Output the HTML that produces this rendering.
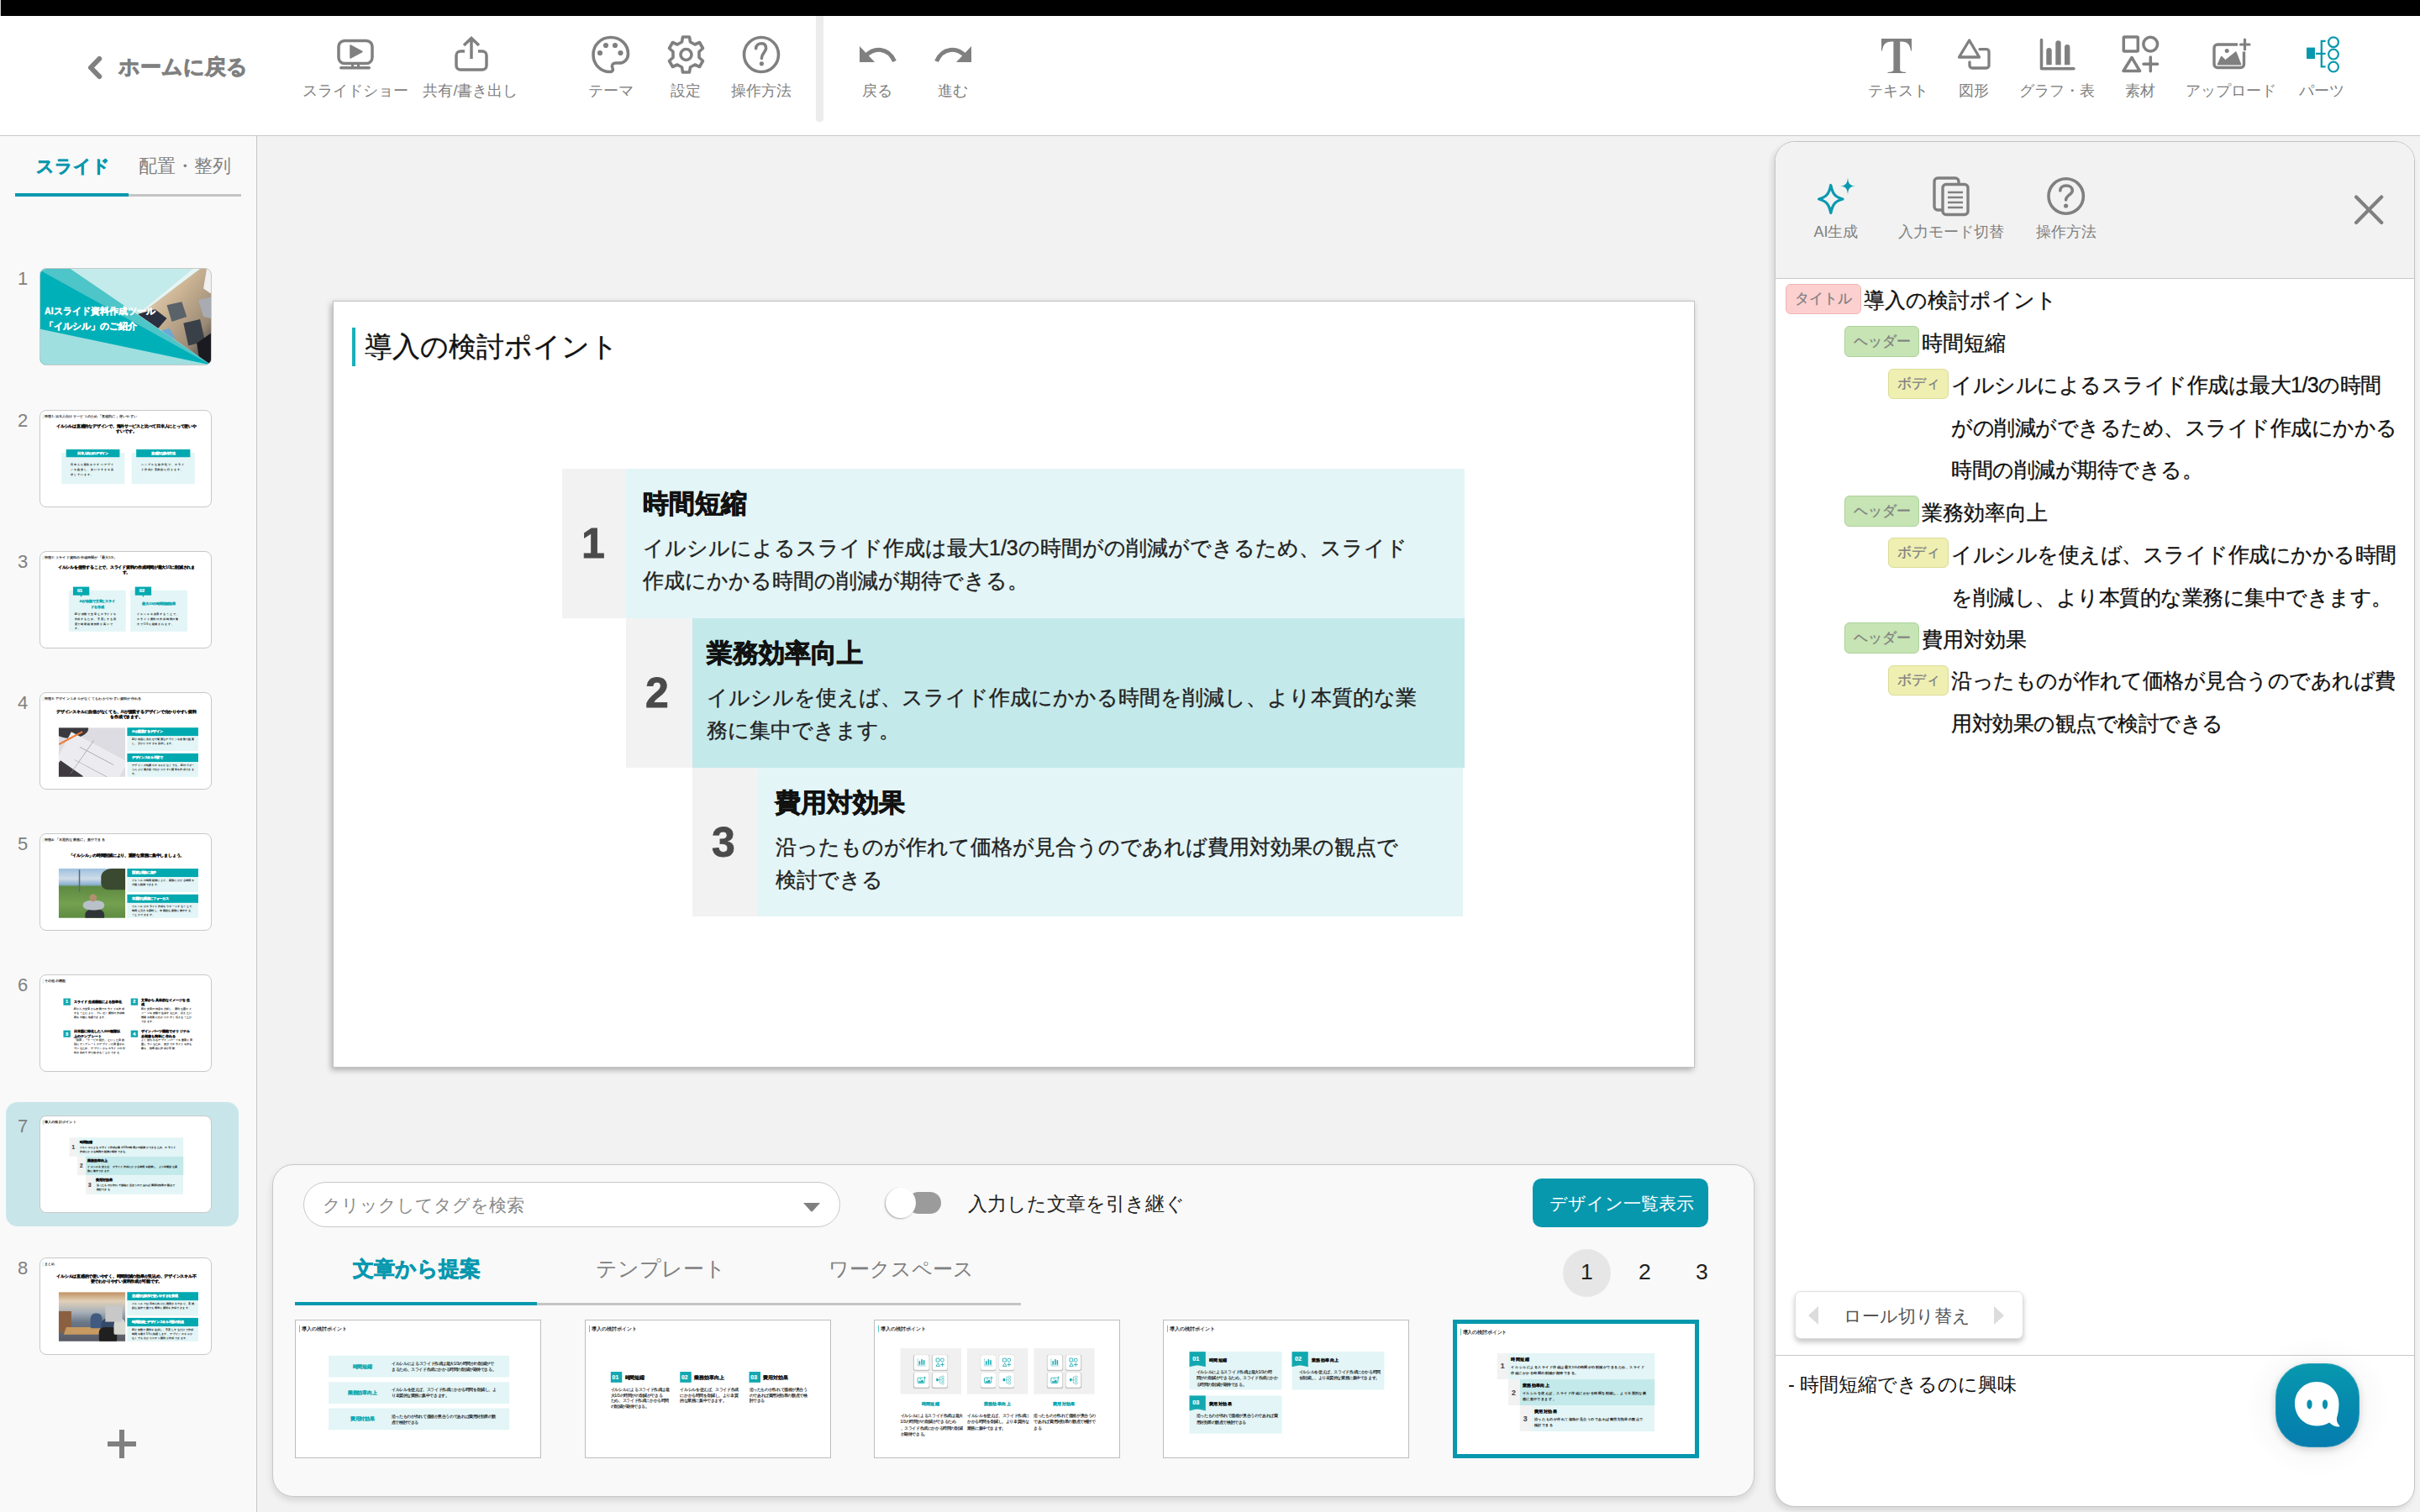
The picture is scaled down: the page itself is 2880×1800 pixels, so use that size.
<!DOCTYPE html>
<html lang="ja">
<head>
<meta charset="utf-8">
<style>
*{box-sizing:border-box;margin:0;padding:0}
html,body{width:2880px;height:1800px;overflow:hidden}
body{position:relative;background:#f2f2f2;font-family:"Liberation Sans",sans-serif;color:#222}
.a{position:absolute;white-space:nowrap}
.g{color:#808080}
.lbl{position:absolute;font-size:18px;line-height:18px;color:#808080;white-space:nowrap;transform:translateX(-50%);top:99px}
svg{position:absolute;overflow:visible}
#topbar{position:absolute;left:0;top:0;width:2880px;height:19px;background:#000}
#toolbar{position:absolute;left:0;top:19px;width:2880px;height:143px;background:#fff;border-bottom:1px solid #c8c8c8}
#sep{position:absolute;left:971px;top:19px;width:9px;height:126px;background:#ececec;border-radius:0 0 4px 4px}
#side{position:absolute;left:0;top:162px;width:306px;height:1638px;background:#f9f9f9;border-right:1px solid #c4c4c4}
.thumb{position:absolute;left:47px;width:205px;height:116px;background:#fff;border:1px solid #c8c8c8;border-radius:8px;overflow:hidden}
.num{position:absolute;left:21px;font-size:22px;line-height:22px;color:#808080}
#slide{position:absolute;left:396px;top:358px;width:1621px;height:913px;background:#fff;box-shadow:inset 0 0 0 1px #c2c2c2,-2px 3px 7px rgba(0,0,0,.28)}
.sl{position:absolute;left:0;top:0;width:1620px;height:912px;transform-origin:0 0}
.sl>div{position:absolute;white-space:nowrap}
#slide .sl>div{-webkit-text-stroke:.35px}
#slide .sl>div.b{-webkit-text-stroke:.8px}
.thumb .sl>div{-webkit-text-stroke:.9px}
.thumb .sl>div.b{-webkit-text-stroke:1.8px}
.dt .sl>div{-webkit-text-stroke:0.8px}
.box{position:absolute}
.gr{background:#f2f2f2}
.t1{background:#e3f5f6}
.t2{background:#c4e9ea}
.nb{position:absolute;font-weight:bold;font-size:50px;line-height:50px;color:#4a4a4a}
.hd{position:absolute;font-weight:bold;font-size:30.5px;line-height:30.5px;color:#111;white-space:nowrap}
.bd{position:absolute;font-size:25px;line-height:39px;color:#222;white-space:nowrap}
#bottom{position:absolute;left:324px;top:1386px;width:1764px;height:396px;background:#f9f9f9;border:1px solid #c8c8c8;border-radius:25px;box-shadow:0 4px 8px rgba(0,0,0,.12)}
#rp{position:absolute;left:2112px;top:168px;width:762px;height:1626px;background:#fff;border:1px solid #c4c4c4;border-radius:24px;overflow:hidden;box-shadow:-3px 4px 7px rgba(0,0,0,.12)}
.tag{position:absolute;height:36px;border-radius:6px;font-size:17px;line-height:34px;color:#808080;text-align:center;white-space:nowrap;-webkit-text-stroke:.3px}
.tt{background:#fdd0d0;border:1px solid #f0b4b4}
.th{background:#c6e4b4;border:1px solid #add29a;height:37px;line-height:35px}
.tb{background:#efefb2;border:1px solid #dcdc98}
.rt{position:absolute;font-size:25px;line-height:25px;color:#111;white-space:nowrap;-webkit-text-stroke:.3px}
.dt{position:absolute;width:293px;height:165px;background:#fff;border:1px solid #bdbdbd;overflow:hidden}
</style>
</head>
<body>
<div id="topbar"></div>
<div class="a" style="left:0;top:0;width:1px;height:19px;background:#cfcfcf"></div>
<div id="toolbar"></div>
<div id="sep"></div>

<!-- home -->
<svg style="left:100px;top:62px" width="30" height="36" viewBox="0 0 30 36"><path d="M18.2 8 L8 18.5 L18.2 29" fill="none" stroke="#808080" stroke-width="6" stroke-linecap="round" stroke-linejoin="round"/></svg>
<div class="a g" style="left:141px;top:68px;font-size:24.5px;line-height:24.5px;font-weight:bold;-webkit-text-stroke:0.9px">ホームに戻る</div>

<!-- toolbar icons -->
<svg style="left:401px;top:46px" width="44" height="38" viewBox="0 0 44 38"><rect x="2" y="2.5" width="40" height="27" rx="7" fill="none" stroke="#808080" stroke-width="3.5"/><path d="M16 8 L30 15.5 L16 23 Z" fill="#808080" stroke="#808080" stroke-width="1.5" stroke-linejoin="round"/><rect x="17" y="29" width="3" height="5" fill="#808080"/><rect x="24" y="29" width="3" height="5" fill="#808080"/><rect x="3" y="33" width="37" height="3.5" rx="1.7" fill="#808080"/></svg>
<div class="lbl" style="left:422.5px">スライドショー</div>

<svg style="left:541px;top:43px" width="40" height="42" viewBox="0 0 40 42"><path d="M12 18 H7 a5 5 0 0 0 -5 5 V35 a5 5 0 0 0 5 5 H33 a5 5 0 0 0 5 -5 V23 a5 5 0 0 0 -5 -5 H28" fill="none" stroke="#808080" stroke-width="3.5"/><path d="M20 27 V3 M11 11 L20 2.5 L29 11" fill="none" stroke="#808080" stroke-width="3.5"/></svg>
<div class="lbl" style="left:560px">共有/書き出し</div>

<svg style="left:704px;top:42px" width="46" height="46" viewBox="0 0 46 46"><path d="M23 2.5 C11 2.5 2 11.5 2 23 C2 35 11 43.5 22 43.5 C25 43.5 26 41 25 39 C23.5 36 25 33 29 33 L33 33 C39 33 43.5 28.5 43.5 22 C43.5 11 34.5 2.5 23 2.5 Z" fill="none" stroke="#808080" stroke-width="3.6"/><circle cx="10" cy="21" r="3.1" fill="#808080"/><circle cx="17" cy="12" r="3.1" fill="#808080"/><circle cx="28" cy="12" r="3.1" fill="#808080"/><circle cx="34.5" cy="21" r="3.1" fill="#808080"/></svg>
<div class="lbl" style="left:726.5px">テーマ</div>

<svg style="left:794px;top:42px" width="45" height="46" viewBox="0 0 45 46"><path d="M18.5 2 H26.5 L27.5 8 L33 11 L38.5 8.5 L42.5 15.5 L38 19.5 V26.5 L42.5 30.5 L38.5 37.5 L33 35 L27.5 38 L26.5 44 H18.5 L17.5 38 L12 35 L6.5 37.5 L2.5 30.5 L7 26.5 V19.5 L2.5 15.5 L6.5 8.5 L12 11 L17.5 8 Z" fill="none" stroke="#808080" stroke-width="3.6" stroke-linejoin="round"/><circle cx="22.5" cy="23" r="6.5" fill="none" stroke="#808080" stroke-width="3.6"/></svg>
<div class="lbl" style="left:816px">設定</div>

<svg style="left:883px;top:42px" width="46" height="46" viewBox="0 0 46 46"><circle cx="23" cy="23" r="20.5" fill="none" stroke="#808080" stroke-width="3.6"/><path d="M16.6 15.8 C16.6 12 19.5 9.7 23.5 9.7 C27.5 9.7 28.6 12.5 28.6 15.5 C28.6 20 23.4 21 23.4 27.5" fill="none" stroke="#808080" stroke-width="3.6" stroke-linecap="round"/><circle cx="23.4" cy="33.8" r="2.6" fill="#808080"/></svg>
<div class="lbl" style="left:906px">操作方法</div>

<svg style="left:1022px;top:53px" width="46" height="22" viewBox="0 0 46 22"><path d="M1 2 V21 H19 Z" fill="#808080"/><path d="M8 14 C18 3 35 3 42.5 20" fill="none" stroke="#808080" stroke-width="5"/></svg>
<div class="lbl" style="left:1043.5px">戻る</div>
<svg style="left:1111px;top:53px" width="46" height="22" viewBox="0 0 46 22"><path d="M45 2 V21 H27 Z" fill="#808080"/><path d="M38 14 C28 3 11 3 3.5 20" fill="none" stroke="#808080" stroke-width="5"/></svg>
<div class="lbl" style="left:1133.5px">進む</div>

<!-- right toolbar -->
<svg style="left:2235px;top:42px" width="45" height="50" viewBox="2235 42 45 50"><path d="M2239 46 H2275 V60.5 H2274 C2273 53 2270 49.5 2263 49.5 H2261.2 V83.5 C2261.2 85 2264 85.6 2268 86 V87 H2246.5 V86 C2250.5 85.6 2253.4 85 2253.4 83.5 V49.5 H2251 C2244 49.5 2241 53 2240 60.5 H2239 Z" fill="#808080"/></svg>
<div class="lbl" style="left:2258.5px">テキスト</div>
<svg style="left:2320px;top:40px" width="60" height="50" viewBox="2320 40 60 50"><path d="M2343.6 48 L2355.5 68 L2331.5 68 Z" fill="none" stroke="#808080" stroke-width="3.3" stroke-linejoin="round"/><path d="M2356 58.6 H2364 a3 3 0 0 1 3 3 V78 a3 3 0 0 1 -3 3 H2347 a3 3 0 0 1 -3 -3 V74" fill="none" stroke="#808080" stroke-width="3.3" stroke-linecap="round"/></svg>
<div class="lbl" style="left:2349px">図形</div>
<svg style="left:2420px;top:40px" width="60" height="50" viewBox="2420 40 60 50"><path d="M2429.5 47.5 V81.8 H2468" fill="none" stroke="#808080" stroke-width="3.5" stroke-linecap="round" stroke-linejoin="round"/><path d="M2435.3 77.2 V60.2 a3.2 3.2 0 0 1 6.4 0 V77.2 Z M2446.3 77.2 V51.5 a3.2 3.2 0 0 1 6.4 0 V77.2 Z M2457 77.2 V56.2 a3.2 3.2 0 0 1 6.4 0 V77.2 Z" fill="#808080"/></svg>
<div class="lbl" style="left:2448px">グラフ・表</div>
<svg style="left:2515px;top:38px" width="65" height="55" viewBox="2515 38 65 55"><rect x="2527.3" y="44" width="17" height="17" rx="1" fill="none" stroke="#808080" stroke-width="3.5"/><circle cx="2559.2" cy="52.6" r="8.4" fill="none" stroke="#808080" stroke-width="3.5"/><path d="M2537 68.5 L2546.5 84.5 H2527 Z" fill="none" stroke="#808080" stroke-width="3.5" stroke-linejoin="round"/><path d="M2559.3 68 V84.7 M2551 76.2 H2567.6" fill="none" stroke="#808080" stroke-width="3.5" stroke-linecap="round"/></svg>
<div class="lbl" style="left:2547px">素材</div>
<svg style="left:2625px;top:40px" width="60" height="50" viewBox="2625 40 60 50"><path d="M2663 53 H2639 a4 4 0 0 0 -4 4 V76.5 a4 4 0 0 0 4 4 H2666.5 a4 4 0 0 0 4 -4 V61.5" fill="none" stroke="#808080" stroke-width="3.4"/><path d="M2639 77 L2643.6 67 L2648.5 71.5 L2661 61.6 L2667 77 Z" fill="#808080" stroke="#808080" stroke-width="1" stroke-linejoin="round"/><circle cx="2650.2" cy="60.4" r="2.5" fill="#808080"/><path d="M2671.5 47.2 V58.8 M2666.5 53 H2677" fill="none" stroke="#808080" stroke-width="3.2" stroke-linecap="round"/></svg>
<div class="lbl" style="left:2655px">アップロード</div>
<svg style="left:2740px;top:40px" width="50" height="50" viewBox="2740 40 50 50"><rect x="2745" y="56.6" width="10" height="13.4" fill="#0798ae"/><path d="M2756 63.8 H2767.6 M2767.6 48.8 H2762.8 V79.3 H2767.6" fill="none" stroke="#0798ae" stroke-width="2.3"/><circle cx="2777" cy="50.2" r="5.9" fill="none" stroke="#0798ae" stroke-width="2.2"/><circle cx="2777" cy="64.6" r="5.9" fill="none" stroke="#0798ae" stroke-width="2.2"/><circle cx="2777" cy="79.6" r="5.9" fill="none" stroke="#0798ae" stroke-width="2.2"/></svg>
<div class="lbl" style="left:2763px">パーツ</div>

<!-- sidebar -->
<div id="side"></div>
<div class="a" style="left:43px;top:187px;font-size:20.7px;line-height:21px;font-weight:bold;color:#0798ae;-webkit-text-stroke:.6px">スライド</div>
<div class="a" style="left:165px;top:187px;font-size:21.8px;line-height:21px;color:#808080">配置・整列</div>
<div class="a" style="left:18px;top:231px;width:269px;height:3px;background:#c4c4c4"></div>
<div class="a" style="left:18px;top:230px;width:135px;height:4px;background:#0798ae"></div>

<!--SIDEBAR--><div class="a" style="left:7px;top:1312px;width:277px;height:148px;background:#c8e6ea;border-radius:14px"></div>
<div class="num" style="top:321px">1</div>
<div class="thumb" style="top:319px"><svg style="left:0;top:0" width="203" height="114" viewBox="0 0 205 116" preserveAspectRatio="none">
<defs><linearGradient id="ph" x1="0" y1="0" x2="1" y2="1"><stop offset="0" stop-color="#ece4d4"/><stop offset=".4" stop-color="#cdb595"/><stop offset=".75" stop-color="#9a8a76"/><stop offset="1" stop-color="#303038"/></linearGradient>
<clipPath id="pc"><polygon points="183,0 205,0 205,116 117,55"/></clipPath></defs>
<rect width="205" height="116" fill="#c4ebeb"/>
<polygon points="0,0 36,0 205,116 0,116" fill="#4ec5c8"/>
<polygon points="0,2 205,116.5 0,116" fill="#00b0b8"/>
<polygon points="0,73 205,116.5 0,116" fill="#9fdfe0"/>
<polygon points="183,0 205,0 205,116 117,55" fill="url(#ph)"/>
<g clip-path="url(#pc)">
<polygon points="178,0 192,0 124,52 117,55" fill="#e3f6f6"/>
<polygon points="117,55 138,49 152,60 140,74" fill="#2a3040"/>
<polygon points="152,44 170,40 176,58 158,64" fill="#5a626a"/>
<polygon points="190,38 205,34 205,60 196,58" fill="#a8acb2"/>
<polygon points="172,66 192,61 198,88 178,93" fill="#3a4048"/>
<polygon points="142,76 155,72 162,84 149,88" fill="#6aaad8"/>
<polygon points="188,90 205,78 205,116 192,116" fill="#1a1a20"/>
<polygon points="200,0 205,0 205,30 196,24" fill="#f0f0f0"/>
</g>
</svg>
<div class="a" style="left:5px;top:44.5px;font-size:10.6px;line-height:11px;color:#fff;font-weight:bold;-webkit-text-stroke:.3px">AIスライド資料作成ツール</div>
<div class="a" style="left:5px;top:63px;font-size:10.6px;line-height:11px;color:#fff;font-weight:bold;-webkit-text-stroke:.3px">「イルシル」のご紹介</div></div>
<div class="num" style="top:490px">2</div>
<div class="thumb" style="top:488px"><div class="sl" style="transform:scale(0.1264);"><div style="left:22px;top:32px;width:5px;height:46px;background:#9adfe2;"></div><div style="left:38px;top:38px;font-size:33px;line-height:33px;color:#222;">特徴1: 日本人向けサービスのため「直感的に」使いやすい</div><div class="b" style="left:810px;top:128.75px;font-size:36.5px;line-height:36.5px;color:#111;font-weight:bold;transform:translateX(-50%)">イルシルは直感的なデザインで、海外サービスと比べて日本人にとって使いや</div><div class="b" style="left:810px;top:175.75px;font-size:36.5px;line-height:36.5px;color:#111;font-weight:bold;transform:translateX(-50%)">すいです。</div><div style="left:200px;top:397px;width:594px;height:293px;background:#e3f5f6;"></div><div style="left:860px;top:397px;width:594px;height:293px;background:#e3f5f6;"></div><div style="left:243px;top:364px;width:504px;height:73px;background:#00a9b0;"></div><div style="left:903px;top:364px;width:508px;height:73px;background:#00a9b0;"></div><div class="b" style="left:495px;top:386px;font-size:28px;line-height:28px;color:#fff;font-weight:bold;transform:translateX(-50%)">日本人向けのデザイン</div><div class="b" style="left:1157px;top:386px;font-size:28px;line-height:28px;color:#fff;font-weight:bold;transform:translateX(-50%)">直感的な操作方法</div><div style="left:283px;top:482.5px;font-size:27px;line-height:47px;color:#333;letter-spacing:4px">日本人に馴染みやすいデザイ<br>ンを提供し、使いやすさを追<br>求しています。</div><div style="left:946px;top:482.5px;font-size:27px;line-height:47px;color:#333;letter-spacing:4px">シンプルな操作性で、スライ<br>ド作成が直感的に行えます。</div></div></div>
<div class="num" style="top:658px">3</div>
<div class="thumb" style="top:656px"><div class="sl" style="transform:scale(0.1264);"><div style="left:22px;top:32px;width:5px;height:46px;background:#9adfe2;"></div><div style="left:38px;top:38px;font-size:33px;line-height:33px;color:#222;">特徴2: スライド資料の作成時間が「最大1/3」</div><div class="b" style="left:810px;top:125.75px;font-size:36.5px;line-height:36.5px;color:#111;font-weight:bold;transform:translateX(-50%)">イルシルを使用することで、スライド資料の作成時間が最大1/3に削減されま</div><div class="b" style="left:810px;top:172.75px;font-size:36.5px;line-height:36.5px;color:#111;font-weight:bold;transform:translateX(-50%)">す。</div><div style="left:268px;top:362px;width:537px;height:388px;background:#e3f5f6;"></div><div style="left:848px;top:362px;width:537px;height:388px;background:#e3f5f6;"></div><div style="left:308px;top:329px;width:153px;height:80px;background:#00a9b0;"></div><div style="left:374px;top:409px;width:0;height:0;border-left:10px solid transparent;border-right:10px solid transparent;border-top:16px solid #00a9b0"></div><div class="b" style="left:348px;top:346px;font-size:44px;line-height:44px;color:#fff;font-weight:bold;">01</div><div style="left:892px;top:329px;width:153px;height:80px;background:#00a9b0;"></div><div style="left:958px;top:409px;width:0;height:0;border-left:10px solid transparent;border-right:10px solid transparent;border-top:16px solid #00a9b0"></div><div class="b" style="left:932px;top:346px;font-size:44px;line-height:44px;color:#fff;font-weight:bold;">02</div><div class="b" style="left:536px;top:446px;font-size:30px;line-height:30px;color:#12a8b0;font-weight:bold;transform:translateX(-50%)">AIが自動で文章とスライ</div><div class="b" style="left:536px;top:505px;font-size:30px;line-height:30px;color:#12a8b0;font-weight:bold;transform:translateX(-50%)">ドを作成</div><div class="b" style="left:1116px;top:472px;font-size:30px;line-height:30px;color:#12a8b0;font-weight:bold;transform:translateX(-50%)">最大1/3の時間削減効果</div><div style="left:322px;top:564.5px;font-size:27px;line-height:45px;color:#333;letter-spacing:3px">AIが自動で文章とスライドを<br>作成するため、手直しする程<br>度で時間削減効果が高いで<br>す。</div><div style="left:910px;top:564.5px;font-size:27px;line-height:45px;color:#333;letter-spacing:3px">イルシルを使用することで、<br>スライド資料の作成時間の最<br>大で1/3に削減されます。</div></div></div>
<div class="num" style="top:826px">4</div>
<div class="thumb" style="top:824px"><div class="sl" style="transform:scale(0.1264);"><div style="left:22px;top:32px;width:5px;height:46px;background:#9adfe2;"></div><div style="left:38px;top:38px;font-size:33px;line-height:33px;color:#222;">特徴3: デザインスキルがなくてもわかりやすい資料が作れる</div><div class="b" style="left:810px;top:160.75px;font-size:36.5px;line-height:36.5px;color:#111;font-weight:bold;transform:translateX(-50%)">デザインスキルに自信がなくても、AIが提案するデザインで分かりやすい資料</div><div class="b" style="left:810px;top:203.75px;font-size:36.5px;line-height:36.5px;color:#111;font-weight:bold;transform:translateX(-50%)">を作成できます。</div><div style="left:172px;top:326px;width:629px;height:464px;overflow:hidden"><div style="position:absolute;left:0;top:0;width:629px;height:472px;background:#dcdce2;overflow:hidden"><div style="position:absolute;left:-60px;top:-80px;width:340px;height:180px;background:#3a3a3e;border-radius:50%"></div><div style="position:absolute;left:120px;top:40px;width:600px;height:520px;background:#ececf0;transform:rotate(28deg);transform-origin:0 0"></div><div style="position:absolute;left:0;top:150px;width:250px;height:16px;background:#f07830;transform:rotate(-28deg);transform-origin:0 0"></div><div style="position:absolute;left:-80px;top:360px;width:260px;height:260px;background:#3e3a40;transform:rotate(35deg)"></div><div style="position:absolute;left:200px;top:180px;width:360px;height:4px;background:#888;transform:rotate(28deg);transform-origin:0 0"></div><div style="position:absolute;left:150px;top:300px;width:360px;height:4px;background:#888;transform:rotate(28deg);transform-origin:0 0"></div><div style="position:absolute;left:330px;top:120px;width:4px;height:380px;background:#999;transform:rotate(35deg);transform-origin:0 0"></div></div></div><div style="left:818px;top:326px;width:669px;height:80px;background:#00a9b0;"></div><div class="b" style="left:863px;top:352.0px;font-size:28px;line-height:28px;color:#fff;font-weight:bold;">AIが提案するデザイン</div><div style="left:818px;top:406px;width:669px;height:141px;background:#e3f5f6;"></div><div style="left:863px;top:415.0px;font-size:24px;line-height:42px;color:#333;letter-spacing:2px">AIが内容に合わせて最適なデザインを自動で提案<br>し、分かりやすさを追求します。</div><div style="left:818px;top:569px;width:669px;height:80px;background:#00a9b0;"></div><div class="b" style="left:863px;top:595.0px;font-size:28px;line-height:28px;color:#fff;font-weight:bold;">デザインスキル不要で</div><div style="left:818px;top:649px;width:669px;height:141px;background:#e3f5f6;"></div><div style="left:863px;top:658.0px;font-size:24px;line-height:42px;color:#333;letter-spacing:2px">デザインの知識やスキルがなくても、AIのサポー<br>トにより魅力的でわかりやすい資料を作成できま<br>す。</div></div></div>
<div class="num" style="top:994px">5</div>
<div class="thumb" style="top:992px"><div class="sl" style="transform:scale(0.1264);"><div style="left:22px;top:32px;width:5px;height:46px;background:#9adfe2;"></div><div style="left:38px;top:38px;font-size:33px;line-height:33px;color:#222;">特徴4: 「本質的な業務に」集中できる</div><div class="b" style="left:810px;top:183.75px;font-size:36.5px;line-height:36.5px;color:#111;font-weight:bold;transform:translateX(-50%)">「イルシル」の時間削減により、重要な業務に集中しましょう。</div><div style="left:172px;top:325px;width:629px;height:464px;overflow:hidden"><div style="position:absolute;left:0;top:0;width:629px;height:472px;background:linear-gradient(180deg,#9cc0e0 0%,#d0dce8 20%,#8ab0d0 32%,#5e8a42 36%,#74a050 70%,#5c8a40 100%);overflow:hidden"><div style="position:absolute;left:400px;top:0;width:260px;height:200px;background:#3a4a30;border-radius:40% 0 0 30%"></div><div style="position:absolute;left:250px;top:380px;width:180px;height:120px;background:#303438;border-radius:40% 40% 0 0"></div><div style="position:absolute;left:230px;top:300px;width:200px;height:90px;background:#b8c0c8;border-radius:40%"></div><div style="position:absolute;left:290px;top:240px;width:70px;height:70px;background:#b09070;border-radius:50%"></div><div style="position:absolute;left:190px;top:10px;width:12px;height:210px;background:#606870"></div></div></div><div style="left:818px;top:325px;width:669px;height:80px;background:#00a9b0;"></div><div class="b" style="left:863px;top:351.0px;font-size:28px;line-height:28px;color:#fff;font-weight:bold;">重要な業務に集中</div><div style="left:818px;top:405px;width:669px;height:141px;background:#e3f5f6;"></div><div style="left:863px;top:414.0px;font-size:24px;line-height:42px;color:#333;letter-spacing:2px">イルシルの時間削減により、業務にかける時間を<br>大幅に削減できます。</div><div style="left:818px;top:568px;width:669px;height:80px;background:#00a9b0;"></div><div class="b" style="left:863px;top:594.0px;font-size:28px;line-height:28px;color:#fff;font-weight:bold;">本質的な業務にフォーカス</div><div style="left:818px;top:648px;width:669px;height:141px;background:#e3f5f6;"></div><div style="left:863px;top:657.0px;font-size:24px;line-height:42px;color:#333;letter-spacing:2px">イルシルがスライド作成をサポートすることで、<br>時間と労力を節約し、本質的な業務に集中する<br>ことができます。</div></div></div>
<div class="num" style="top:1162px">6</div>
<div class="thumb" style="top:1160px"><div class="sl" style="transform:scale(0.1264);"><div style="left:22px;top:32px;width:5px;height:46px;background:#9adfe2;"></div><div style="left:38px;top:38px;font-size:33px;line-height:33px;color:#222;">その他の機能</div><div style="left:217px;top:218px;width:67px;height:65px;background:#12a8b0;"></div><div class="b" style="left:237px;top:228px;font-size:44px;line-height:44px;color:#fff;font-weight:bold;">1</div><div class="b" style="left:315px;top:235px;font-size:32px;line-height:32px;color:#111;font-weight:bold;">スライド生成機能による効率化</div><div style="left:315px;top:295.0px;font-size:25px;line-height:40px;color:#333;letter-spacing:1px">AIが入力文章から自動でスライドを作成<br>することにより、プレゼン資料の作成時<br>間を大幅に短縮できます。</div><div style="left:852px;top:218px;width:67px;height:65px;background:#12a8b0;"></div><div class="b" style="left:872px;top:228px;font-size:44px;line-height:44px;color:#fff;font-weight:bold;">2</div><div class="b" style="left:950px;top:219px;font-size:32px;line-height:32px;color:#111;font-weight:bold;">文章から具体的なイメージを生</div><div class="b" style="left:950px;top:259px;font-size:32px;line-height:32px;color:#111;font-weight:bold;">成</div><div style="left:950px;top:295.0px;font-size:25px;line-height:40px;color:#333;letter-spacing:1px">AIが文章の内容を分析し、適切な図やイ<br>メージを自動で生成するため、伝えたい<br>情報を視覚にわかりやすく伝えることが<br>できます。</div><div style="left:217px;top:519px;width:67px;height:65px;background:#12a8b0;"></div><div class="b" style="left:237px;top:529px;font-size:44px;line-height:44px;color:#fff;font-weight:bold;">3</div><div class="b" style="left:315px;top:514px;font-size:32px;line-height:32px;color:#111;font-weight:bold;">日本語に特化した1,000種類以</div><div class="b" style="left:315px;top:561px;font-size:32px;line-height:32px;color:#111;font-weight:bold;">上のテンプレート</div><div style="left:315px;top:590.0px;font-size:25px;line-height:40px;color:#333;letter-spacing:1px">「採用」「サービス紹介」といった目的<br>別にテンプレートやデザインが用意され<br>ているため、デザインからスライドの方<br>向を決めて作り始めることができる</div><div style="left:852px;top:519px;width:67px;height:65px;background:#12a8b0;"></div><div class="b" style="left:872px;top:529px;font-size:44px;line-height:44px;color:#fff;font-weight:bold;">4</div><div class="b" style="left:950px;top:514px;font-size:32px;line-height:32px;color:#111;font-weight:bold;">ザインパーツ機能でオリジナル</div><div class="b" style="left:950px;top:561px;font-size:32px;line-height:32px;color:#111;font-weight:bold;">企画書も簡単に作れる</div><div style="left:950px;top:590.0px;font-size:25px;line-height:40px;color:#333;letter-spacing:1px">よく使われるデザインパーツを豊富に用<br>意しているため、自分でスライドを作る<br>際も、効率的に作成が可能</div></div></div>
<div class="num" style="top:1330px">7</div>
<div class="thumb" style="top:1328px"><div class="sl" style="transform:scale(0.1264);"><div style="left:23px;top:32px;width:4px;height:46px;background:#1ab0b8;"></div><div style="left:38px;top:38px;font-size:33px;line-height:33px;color:#111;">導入の検討ポイント</div><div style="left:273px;top:200px;width:76px;height:178px;background:#f2f2f2;"></div><div style="left:349px;top:200px;width:998px;height:178px;background:#e3f5f6;"></div><div style="left:349px;top:378px;width:79px;height:178px;background:#f2f2f2;"></div><div style="left:428px;top:378px;width:919px;height:178px;background:#c4e9ea;"></div><div style="left:428px;top:556px;width:78px;height:177px;background:#f2f2f2;"></div><div style="left:506px;top:556px;width:839px;height:177px;background:#e3f5f6;"></div><div class="b" style="left:296px;top:264px;font-size:50px;line-height:50px;color:#4a4a4a;font-weight:bold;">1</div><div class="b" style="left:372px;top:442px;font-size:50px;line-height:50px;color:#4a4a4a;font-weight:bold;">2</div><div class="b" style="left:451px;top:620px;font-size:50px;line-height:50px;color:#4a4a4a;font-weight:bold;">3</div><div class="b" style="left:369px;top:226px;font-size:30.5px;line-height:30.5px;color:#111;font-weight:bold;">時間短縮</div><div class="b" style="left:445px;top:404px;font-size:30.5px;line-height:30.5px;color:#111;font-weight:bold;">業務効率向上</div><div class="b" style="left:526px;top:582px;font-size:30.5px;line-height:30.5px;color:#111;font-weight:bold;">費用対効果</div><div style="left:369px;top:275px;font-size:25px;line-height:39px;color:#222;">イルシルによるスライド作成は最大1/3の時間がの削減ができるため、スライド<br>作成にかかる時間の削減が期待できる。</div><div style="left:445px;top:453px;font-size:25px;line-height:39px;color:#222;">イルシルを使えば、スライド作成にかかる時間を削減し、より本質的な業<br>務に集中できます。</div><div style="left:527px;top:631px;font-size:25px;line-height:39px;color:#222;">沿ったものが作れて価格が見合うのであれば費用対効果の観点で<br>検討できる</div></div></div>
<div class="num" style="top:1499px">8</div>
<div class="thumb" style="top:1497px"><div class="sl" style="transform:scale(0.1264);"><div style="left:22px;top:32px;width:5px;height:46px;background:#9adfe2;"></div><div style="left:38px;top:38px;font-size:33px;line-height:33px;color:#222;">まとめ</div><div class="b" style="left:810px;top:150.75px;font-size:36.5px;line-height:36.5px;color:#111;font-weight:bold;transform:translateX(-50%)">イルシルは直感的で使いやすく、時間削減の効果が見込め、デザインスキル不</div><div class="b" style="left:810px;top:197.75px;font-size:36.5px;line-height:36.5px;color:#111;font-weight:bold;transform:translateX(-50%)">要でわかりやすい資料作成が可能です。</div><div style="left:172px;top:318px;width:629px;height:464px;overflow:hidden"><div style="position:absolute;left:0;top:0;width:629px;height:472px;background:linear-gradient(180deg,#c09060 0%,#e0d0b8 18%,#a8b0b8 40%,#6a7888 60%,#585860 100%);overflow:hidden"><div style="position:absolute;left:0;top:180px;width:120px;height:200px;background:#8a6040"></div><div style="position:absolute;left:60px;top:330px;width:330px;height:70px;background:#c89a60;transform:skewX(-20deg)"></div><div style="position:absolute;left:300px;top:200px;width:110px;height:140px;background:#405a80;border-radius:40% 40% 10% 10%"></div><div style="position:absolute;left:400px;top:250px;width:130px;height:150px;background:#344868;border-radius:40% 40% 10% 10%"></div><div style="position:absolute;left:380px;top:330px;width:170px;height:160px;background:#202020;border-radius:30%"></div><div style="position:absolute;left:520px;top:250px;width:110px;height:150px;background:#d8d8d0;border-radius:40% 40% 10% 10%"></div><div style="position:absolute;left:440px;top:130px;width:160px;height:150px;background:#c8c8c8"></div></div></div><div style="left:818px;top:318px;width:669px;height:80px;background:#00a9b0;"></div><div class="b" style="left:863px;top:344.0px;font-size:28px;line-height:28px;color:#fff;font-weight:bold;">直感的な操作で使いやすさを実現</div><div style="left:818px;top:398px;width:669px;height:141px;background:#e3f5f6;"></div><div style="left:863px;top:407.0px;font-size:24px;line-height:42px;color:#333;letter-spacing:2px">イルシルでは日本人向けに開発されており、直感<br>的な操作で誰でも簡単に資料を作成できます。</div><div style="left:818px;top:561px;width:669px;height:80px;background:#00a9b0;"></div><div class="b" style="left:863px;top:587.0px;font-size:28px;line-height:28px;color:#fff;font-weight:bold;">時間削減とデザインスキル不要の利点</div><div style="left:818px;top:641px;width:669px;height:141px;background:#e3f5f6;"></div><div style="left:863px;top:650.0px;font-size:24px;line-height:42px;color:#333;letter-spacing:2px">AIが自動で資料を生成し、手直しするだけで作成<br>時間を最大1/3に短縮します。デザインスキルが<br>なくてもわかりやすい資料が作成できます。</div></div></div>
<!--/SIDEBAR-->
<svg style="left:128px;top:1702px" width="34" height="34" viewBox="0 0 34 34"><path d="M17 0 V34 M0 17 H34" stroke="#808080" stroke-width="6"/></svg>


<!-- main slide -->
<!--SLIDE--><div id="slide"><div class="sl" style="transform:scale(1);"><div style="left:23px;top:32px;width:4px;height:46px;background:#1ab0b8;"></div><div style="left:38px;top:38px;font-size:33px;line-height:33px;color:#111;">導入の検討ポイント</div><div style="left:273px;top:200px;width:76px;height:178px;background:#f2f2f2;"></div><div style="left:349px;top:200px;width:998px;height:178px;background:#e3f5f6;"></div><div style="left:349px;top:378px;width:79px;height:178px;background:#f2f2f2;"></div><div style="left:428px;top:378px;width:919px;height:178px;background:#c4e9ea;"></div><div style="left:428px;top:556px;width:78px;height:177px;background:#f2f2f2;"></div><div style="left:506px;top:556px;width:839px;height:177px;background:#e3f5f6;"></div><div class="b" style="left:296px;top:264px;font-size:50px;line-height:50px;color:#4a4a4a;font-weight:bold;">1</div><div class="b" style="left:372px;top:442px;font-size:50px;line-height:50px;color:#4a4a4a;font-weight:bold;">2</div><div class="b" style="left:451px;top:620px;font-size:50px;line-height:50px;color:#4a4a4a;font-weight:bold;">3</div><div class="b" style="left:369px;top:226px;font-size:30.5px;line-height:30.5px;color:#111;font-weight:bold;">時間短縮</div><div class="b" style="left:445px;top:404px;font-size:30.5px;line-height:30.5px;color:#111;font-weight:bold;">業務効率向上</div><div class="b" style="left:526px;top:582px;font-size:30.5px;line-height:30.5px;color:#111;font-weight:bold;">費用対効果</div><div style="left:369px;top:275px;font-size:25px;line-height:39px;color:#222;">イルシルによるスライド作成は最大1/3の時間がの削減ができるため、スライド<br>作成にかかる時間の削減が期待できる。</div><div style="left:445px;top:453px;font-size:25px;line-height:39px;color:#222;">イルシルを使えば、スライド作成にかかる時間を削減し、より本質的な業<br>務に集中できます。</div><div style="left:527px;top:631px;font-size:25px;line-height:39px;color:#222;">沿ったものが作れて価格が見合うのであれば費用対効果の観点で<br>検討できる</div></div></div>
<!--/SLIDE-->

<!-- bottom panel -->
<div id="bottom"></div>
<div class="a" style="left:361px;top:1407px;width:639px;height:54px;background:#fff;border:1px solid #c8c8c8;border-radius:27px"></div>
<div class="a" style="left:384px;top:1424px;font-size:20.5px;line-height:21px;color:#8a8a8a">クリックしてタグを検索</div>
<svg style="left:955px;top:1431px" width="22" height="12" viewBox="0 0 22 12"><path d="M1 1 H21 L12 11 a1.5 1.5 0 0 1 -2 0 Z" fill="#808080"/></svg>
<div class="a" style="left:1080px;top:1419px;width:40px;height:26px;background:#9b9b9b;border-radius:13px"></div>
<div class="a" style="left:1054px;top:1414px;width:36px;height:36px;background:#fff;border-radius:50%;box-shadow:-1px 1px 2px rgba(0,0,0,.3)"></div>
<div class="a" style="left:1152px;top:1422px;font-size:23px;line-height:23px;color:#222">入力した文章を引き継ぐ</div>
<div class="a" style="left:1824px;top:1403px;width:209px;height:58px;background:#0798ae;border-radius:10.5px"></div>
<div class="a" style="left:1844px;top:1422px;font-size:20.8px;line-height:21px;color:#fff">デザイン一覧表示</div>
<div class="a" style="left:420px;top:1498px;font-size:25px;line-height:25px;color:#0798ae;font-weight:bold;-webkit-text-stroke:.7px">文章から提案</div>
<div class="a" style="left:709px;top:1498px;font-size:25px;line-height:25px;color:#808080">テンプレート</div>
<div class="a" style="left:986px;top:1498px;font-size:24.3px;line-height:25px;color:#808080">ワークスペース</div>
<div class="a" style="left:351px;top:1551px;width:864px;height:3px;background:#c4c4c4"></div>
<div class="a" style="left:351px;top:1550px;width:288px;height:4px;background:#0798ae"></div>
<div class="a" style="left:1860px;top:1487px;width:57px;height:57px;background:#e6e6e6;border-radius:50%"></div>
<div class="a" style="left:1881px;top:1501px;font-size:26.5px;line-height:26.5px;color:#222">1</div>
<div class="a" style="left:1950px;top:1501px;font-size:26.5px;line-height:26.5px;color:#222">2</div>
<div class="a" style="left:2018px;top:1501px;font-size:26.5px;line-height:26.5px;color:#222">3</div>
<!--DESIGNS--><div class="dt" style="left:351px;top:1571px"><div class="sl" style="transform:scale(0.17962962962962964);"><div style="left:23px;top:32px;width:4px;height:46px;background:#1ab0b8;"></div><div style="left:38px;top:38px;font-size:33px;line-height:33px;color:#111;">導入の検討ポイント</div><div style="left:217px;top:233px;width:1198px;height:143px;background:#e3f5f6;"></div><div class="b" style="left:442px;top:288px;font-size:33px;line-height:33px;color:#12a8b0;font-weight:bold;transform:translateX(-50%)">時間短縮</div><div style="left:634px;top:267px;font-size:25px;line-height:38px;color:#222;">イルシルによるスライド作成は最大1/3の時間がの削減がで<br>きるため、スライド作成にかかる時間の削減が期待できる。</div><div style="left:217px;top:408px;width:1198px;height:143px;background:#e3f5f6;"></div><div class="b" style="left:442px;top:463px;font-size:33px;line-height:33px;color:#12a8b0;font-weight:bold;transform:translateX(-50%)">業務効率向上</div><div style="left:634px;top:442px;font-size:25px;line-height:38px;color:#222;">イルシルを使えば、スライド作成にかかる時間を削減し、よ<br>り本質的な業務に集中できます。</div><div style="left:217px;top:582px;width:1198px;height:143px;background:#e3f5f6;"></div><div class="b" style="left:442px;top:637px;font-size:33px;line-height:33px;color:#12a8b0;font-weight:bold;transform:translateX(-50%)">費用対効果</div><div style="left:634px;top:616px;font-size:25px;line-height:38px;color:#222;">沿ったものが作れて価格が見合うのであれば費用対効果の観<br>点で検討できる</div></div></div>
<div class="dt" style="left:696px;top:1571px"><div class="sl" style="transform:scale(0.17962962962962964);"><div style="left:23px;top:32px;width:4px;height:46px;background:#1ab0b8;"></div><div style="left:38px;top:38px;font-size:33px;line-height:33px;color:#111;">導入の検討ポイント</div><div style="left:166px;top:340px;width:75px;height:71px;background:#12a8b0;"></div><div class="b" style="left:176px;top:356px;font-size:38px;line-height:38px;color:#fff;font-weight:bold;">01</div><div class="b" style="left:259px;top:359px;font-size:33px;line-height:33px;color:#111;font-weight:bold;">時間短縮</div><div style="left:166px;top:443px;font-size:25px;line-height:36px;color:#222;">イルシルによるスライド作成は最<br>大1/3の時間がの削減ができる<br>ため、スライド作成にかかる時間<br>の削減が期待できる。</div><div style="left:625px;top:340px;width:75px;height:71px;background:#12a8b0;"></div><div class="b" style="left:635px;top:356px;font-size:38px;line-height:38px;color:#fff;font-weight:bold;">02</div><div class="b" style="left:718px;top:359px;font-size:33px;line-height:33px;color:#111;font-weight:bold;">業務効率向上</div><div style="left:625px;top:443px;font-size:25px;line-height:36px;color:#222;">イルシルを使えば、スライド作成<br>にかかる時間を削減し、より本質<br>的な業務に集中できます。</div><div style="left:1083px;top:340px;width:75px;height:71px;background:#12a8b0;"></div><div class="b" style="left:1093px;top:356px;font-size:38px;line-height:38px;color:#fff;font-weight:bold;">03</div><div class="b" style="left:1176px;top:359px;font-size:33px;line-height:33px;color:#111;font-weight:bold;">費用対効果</div><div style="left:1083px;top:443px;font-size:25px;line-height:36px;color:#222;">沿ったものが作れて価格が見合う<br>のであれば費用対効果の観点で検<br>討できる</div></div></div>
<div class="dt" style="left:1040px;top:1571px"><div class="sl" style="transform:scale(0.17962962962962964);"><div style="left:23px;top:32px;width:4px;height:46px;background:#1ab0b8;"></div><div style="left:38px;top:38px;font-size:33px;line-height:33px;color:#111;">導入の検討ポイント</div><div style="left:170px;top:184px;width:403px;height:304px;background:#f0f0f0;"></div><div style="left:261px;top:229px;width:98px;height:98px;background:#fff;border-radius:10px;box-shadow:0 4px 6px rgba(0,0,0,.22)"><svg style="position:absolute;left:17px;top:17px" width="64" height="64" viewBox="2424 43 48 44"><path d="M2429.5 47.5 V81.8 H2468" fill="none" stroke="#12a8b0" stroke-width="3.5" stroke-linecap="round" stroke-linejoin="round" opacity=".5"/><path d="M2435.3 77.2 V60.2 a3.2 3.2 0 0 1 6.4 0 V77.2 Z M2446.3 77.2 V51.5 a3.2 3.2 0 0 1 6.4 0 V77.2 Z M2457 77.2 V56.2 a3.2 3.2 0 0 1 6.4 0 V77.2 Z" fill="#12a8b0"/></svg></div><div style="left:383px;top:229px;width:98px;height:98px;background:#fff;border-radius:10px;box-shadow:0 4px 6px rgba(0,0,0,.22)"><svg style="position:absolute;left:17px;top:17px" width="64" height="64" viewBox="2522 40 50 50"><rect x="2527.3" y="44" width="17" height="17" rx="1" fill="none" stroke="#12a8b0" stroke-width="3.5"/><circle cx="2559.2" cy="52.6" r="8.4" fill="none" stroke="#12a8b0" stroke-width="3.5"/><path d="M2537 68.5 L2546.5 84.5 H2527 Z" fill="none" stroke="#12a8b0" stroke-width="3.5" stroke-linejoin="round"/><path d="M2559.3 68 V84.7 M2551 76.2 H2567.6" fill="none" stroke="#12a8b0" stroke-width="3.5" stroke-linecap="round"/></svg></div><div style="left:261px;top:345px;width:98px;height:98px;background:#fff;border-radius:10px;box-shadow:0 4px 6px rgba(0,0,0,.22)"><svg style="position:absolute;left:17px;top:17px" width="64" height="64" viewBox="2630 43 50 42"><path d="M2663 53 H2639 a4 4 0 0 0 -4 4 V76.5 a4 4 0 0 0 4 4 H2666.5 a4 4 0 0 0 4 -4 V61.5" fill="none" stroke="#12a8b0" stroke-width="3.4"/><path d="M2639 77 L2643.6 67 L2648.5 71.5 L2661 61.6 L2667 77 Z" fill="#12a8b0"/><circle cx="2650.2" cy="60.4" r="2.5" fill="#12a8b0"/><path d="M2671.5 47.2 V58.8 M2666.5 53 H2677" fill="none" stroke="#12a8b0" stroke-width="3.2" stroke-linecap="round"/></svg></div><div style="left:383px;top:345px;width:98px;height:98px;background:#fff;border-radius:10px;box-shadow:0 4px 6px rgba(0,0,0,.22)"><svg style="position:absolute;left:17px;top:17px" width="64" height="64" viewBox="2741 40 44 48"><rect x="2745" y="56.6" width="10" height="13.4" fill="#12a8b0"/><path d="M2756 63.8 H2767.6 M2767.6 48.8 H2762.8 V79.3 H2767.6" fill="none" stroke="#12a8b0" stroke-width="2.3"/><circle cx="2777" cy="50.2" r="5.9" fill="none" stroke="#12a8b0" stroke-width="2.2"/><circle cx="2777" cy="64.6" r="5.9" fill="none" stroke="#12a8b0" stroke-width="2.2"/><circle cx="2777" cy="79.6" r="5.9" fill="none" stroke="#12a8b0" stroke-width="2.2"/></svg></div><div class="b" style="left:370px;top:538px;font-size:30px;line-height:30px;color:#12a8b0;font-weight:bold;transform:translateX(-50%)">時間短縮</div><div style="left:170px;top:611px;font-size:25px;line-height:41px;color:#222;">イルシルによるスライド作成は最大<br>1/3の時間がの削減ができるため<br>、スライド作成にかかる時間の削減<br>が期待できる。</div><div style="left:612px;top:184px;width:403px;height:304px;background:#f0f0f0;"></div><div style="left:703px;top:229px;width:98px;height:98px;background:#fff;border-radius:10px;box-shadow:0 4px 6px rgba(0,0,0,.22)"><svg style="position:absolute;left:17px;top:17px" width="64" height="64" viewBox="2424 43 48 44"><path d="M2429.5 47.5 V81.8 H2468" fill="none" stroke="#12a8b0" stroke-width="3.5" stroke-linecap="round" stroke-linejoin="round" opacity=".5"/><path d="M2435.3 77.2 V60.2 a3.2 3.2 0 0 1 6.4 0 V77.2 Z M2446.3 77.2 V51.5 a3.2 3.2 0 0 1 6.4 0 V77.2 Z M2457 77.2 V56.2 a3.2 3.2 0 0 1 6.4 0 V77.2 Z" fill="#12a8b0"/></svg></div><div style="left:825px;top:229px;width:98px;height:98px;background:#fff;border-radius:10px;box-shadow:0 4px 6px rgba(0,0,0,.22)"><svg style="position:absolute;left:17px;top:17px" width="64" height="64" viewBox="2522 40 50 50"><rect x="2527.3" y="44" width="17" height="17" rx="1" fill="none" stroke="#12a8b0" stroke-width="3.5"/><circle cx="2559.2" cy="52.6" r="8.4" fill="none" stroke="#12a8b0" stroke-width="3.5"/><path d="M2537 68.5 L2546.5 84.5 H2527 Z" fill="none" stroke="#12a8b0" stroke-width="3.5" stroke-linejoin="round"/><path d="M2559.3 68 V84.7 M2551 76.2 H2567.6" fill="none" stroke="#12a8b0" stroke-width="3.5" stroke-linecap="round"/></svg></div><div style="left:703px;top:345px;width:98px;height:98px;background:#fff;border-radius:10px;box-shadow:0 4px 6px rgba(0,0,0,.22)"><svg style="position:absolute;left:17px;top:17px" width="64" height="64" viewBox="2630 43 50 42"><path d="M2663 53 H2639 a4 4 0 0 0 -4 4 V76.5 a4 4 0 0 0 4 4 H2666.5 a4 4 0 0 0 4 -4 V61.5" fill="none" stroke="#12a8b0" stroke-width="3.4"/><path d="M2639 77 L2643.6 67 L2648.5 71.5 L2661 61.6 L2667 77 Z" fill="#12a8b0"/><circle cx="2650.2" cy="60.4" r="2.5" fill="#12a8b0"/><path d="M2671.5 47.2 V58.8 M2666.5 53 H2677" fill="none" stroke="#12a8b0" stroke-width="3.2" stroke-linecap="round"/></svg></div><div style="left:825px;top:345px;width:98px;height:98px;background:#fff;border-radius:10px;box-shadow:0 4px 6px rgba(0,0,0,.22)"><svg style="position:absolute;left:17px;top:17px" width="64" height="64" viewBox="2741 40 44 48"><rect x="2745" y="56.6" width="10" height="13.4" fill="#12a8b0"/><path d="M2756 63.8 H2767.6 M2767.6 48.8 H2762.8 V79.3 H2767.6" fill="none" stroke="#12a8b0" stroke-width="2.3"/><circle cx="2777" cy="50.2" r="5.9" fill="none" stroke="#12a8b0" stroke-width="2.2"/><circle cx="2777" cy="64.6" r="5.9" fill="none" stroke="#12a8b0" stroke-width="2.2"/><circle cx="2777" cy="79.6" r="5.9" fill="none" stroke="#12a8b0" stroke-width="2.2"/></svg></div><div class="b" style="left:812px;top:538px;font-size:30px;line-height:30px;color:#12a8b0;font-weight:bold;transform:translateX(-50%)">業務効率向上</div><div style="left:612px;top:611px;font-size:25px;line-height:41px;color:#222;">イルシルを使えば、スライド作成に<br>かかる時間を削減し、より本質的な<br>業務に集中できます。</div><div style="left:1054px;top:184px;width:403px;height:304px;background:#f0f0f0;"></div><div style="left:1145px;top:229px;width:98px;height:98px;background:#fff;border-radius:10px;box-shadow:0 4px 6px rgba(0,0,0,.22)"><svg style="position:absolute;left:17px;top:17px" width="64" height="64" viewBox="2424 43 48 44"><path d="M2429.5 47.5 V81.8 H2468" fill="none" stroke="#12a8b0" stroke-width="3.5" stroke-linecap="round" stroke-linejoin="round" opacity=".5"/><path d="M2435.3 77.2 V60.2 a3.2 3.2 0 0 1 6.4 0 V77.2 Z M2446.3 77.2 V51.5 a3.2 3.2 0 0 1 6.4 0 V77.2 Z M2457 77.2 V56.2 a3.2 3.2 0 0 1 6.4 0 V77.2 Z" fill="#12a8b0"/></svg></div><div style="left:1267px;top:229px;width:98px;height:98px;background:#fff;border-radius:10px;box-shadow:0 4px 6px rgba(0,0,0,.22)"><svg style="position:absolute;left:17px;top:17px" width="64" height="64" viewBox="2522 40 50 50"><rect x="2527.3" y="44" width="17" height="17" rx="1" fill="none" stroke="#12a8b0" stroke-width="3.5"/><circle cx="2559.2" cy="52.6" r="8.4" fill="none" stroke="#12a8b0" stroke-width="3.5"/><path d="M2537 68.5 L2546.5 84.5 H2527 Z" fill="none" stroke="#12a8b0" stroke-width="3.5" stroke-linejoin="round"/><path d="M2559.3 68 V84.7 M2551 76.2 H2567.6" fill="none" stroke="#12a8b0" stroke-width="3.5" stroke-linecap="round"/></svg></div><div style="left:1145px;top:345px;width:98px;height:98px;background:#fff;border-radius:10px;box-shadow:0 4px 6px rgba(0,0,0,.22)"><svg style="position:absolute;left:17px;top:17px" width="64" height="64" viewBox="2630 43 50 42"><path d="M2663 53 H2639 a4 4 0 0 0 -4 4 V76.5 a4 4 0 0 0 4 4 H2666.5 a4 4 0 0 0 4 -4 V61.5" fill="none" stroke="#12a8b0" stroke-width="3.4"/><path d="M2639 77 L2643.6 67 L2648.5 71.5 L2661 61.6 L2667 77 Z" fill="#12a8b0"/><circle cx="2650.2" cy="60.4" r="2.5" fill="#12a8b0"/><path d="M2671.5 47.2 V58.8 M2666.5 53 H2677" fill="none" stroke="#12a8b0" stroke-width="3.2" stroke-linecap="round"/></svg></div><div style="left:1267px;top:345px;width:98px;height:98px;background:#fff;border-radius:10px;box-shadow:0 4px 6px rgba(0,0,0,.22)"><svg style="position:absolute;left:17px;top:17px" width="64" height="64" viewBox="2741 40 44 48"><rect x="2745" y="56.6" width="10" height="13.4" fill="#12a8b0"/><path d="M2756 63.8 H2767.6 M2767.6 48.8 H2762.8 V79.3 H2767.6" fill="none" stroke="#12a8b0" stroke-width="2.3"/><circle cx="2777" cy="50.2" r="5.9" fill="none" stroke="#12a8b0" stroke-width="2.2"/><circle cx="2777" cy="64.6" r="5.9" fill="none" stroke="#12a8b0" stroke-width="2.2"/><circle cx="2777" cy="79.6" r="5.9" fill="none" stroke="#12a8b0" stroke-width="2.2"/></svg></div><div class="b" style="left:1254px;top:538px;font-size:30px;line-height:30px;color:#12a8b0;font-weight:bold;transform:translateX(-50%)">費用対効果</div><div style="left:1054px;top:611px;font-size:25px;line-height:41px;color:#222;">沿ったものが作れて価格が見合うの<br>であれば費用対効果の観点で検討で<br>きる</div></div></div>
<div class="dt" style="left:1384px;top:1571px"><div class="sl" style="transform:scale(0.17962962962962964);"><div style="left:23px;top:32px;width:4px;height:46px;background:#1ab0b8;"></div><div style="left:38px;top:38px;font-size:33px;line-height:33px;color:#111;">導入の検討ポイント</div><div style="left:170px;top:207px;width:612px;height:252px;background:#e3f5f6;"></div><div style="left:170px;top:207px;width:107px;height:90px;background:#12a8b0;"></div><div style="left:170px;top:295px;width:0;height:0;border-left:53px solid #12a8b0;border-right:54px solid #12a8b0;border-bottom:12px solid transparent"></div><div class="b" style="left:190px;top:231px;font-size:40px;line-height:40px;color:#fff;font-weight:bold;">01</div><div class="b" style="left:301px;top:245px;font-size:30px;line-height:30px;color:#111;font-weight:bold;">時間短縮</div><div style="left:216px;top:322px;font-size:25px;line-height:41px;color:#222;">イルシルによるスライド作成は最大1/3の時<br>間がの削減ができるため、スライド作成にかか<br>る時間の削減が期待できる。</div><div style="left:849px;top:207px;width:612px;height:252px;background:#e3f5f6;"></div><div style="left:849px;top:207px;width:107px;height:90px;background:#12a8b0;"></div><div style="left:849px;top:295px;width:0;height:0;border-left:53px solid #12a8b0;border-right:54px solid #12a8b0;border-bottom:12px solid transparent"></div><div class="b" style="left:869px;top:231px;font-size:40px;line-height:40px;color:#fff;font-weight:bold;">02</div><div class="b" style="left:980px;top:245px;font-size:30px;line-height:30px;color:#111;font-weight:bold;">業務効率向上</div><div style="left:895px;top:322px;font-size:25px;line-height:41px;color:#222;">イルシルを使えば、スライド作成にかかる時間<br>を削減し、より本質的な業務に集中できます。</div><div style="left:170px;top:498px;width:612px;height:252px;background:#e3f5f6;"></div><div style="left:170px;top:498px;width:107px;height:90px;background:#12a8b0;"></div><div style="left:170px;top:586px;width:0;height:0;border-left:53px solid #12a8b0;border-right:54px solid #12a8b0;border-bottom:12px solid transparent"></div><div class="b" style="left:190px;top:522px;font-size:40px;line-height:40px;color:#fff;font-weight:bold;">03</div><div class="b" style="left:301px;top:536px;font-size:30px;line-height:30px;color:#111;font-weight:bold;">費用対効果</div><div style="left:216px;top:613px;font-size:25px;line-height:41px;color:#222;">沿ったものが作れて価格が見合うのであれば費<br>用対効果の観点で検討できる</div></div></div>
<div class="dt" style="left:1729px;top:1571px;border:5px solid #0798ae"><div class="sl" style="transform:scale(0.17469135802469135);"><div style="left:23px;top:32px;width:4px;height:46px;background:#1ab0b8;"></div><div style="left:38px;top:38px;font-size:33px;line-height:33px;color:#111;">導入の検討ポイント</div><div style="left:273px;top:200px;width:76px;height:178px;background:#f2f2f2;"></div><div style="left:349px;top:200px;width:998px;height:178px;background:#e3f5f6;"></div><div style="left:349px;top:378px;width:79px;height:178px;background:#f2f2f2;"></div><div style="left:428px;top:378px;width:919px;height:178px;background:#c4e9ea;"></div><div style="left:428px;top:556px;width:78px;height:177px;background:#f2f2f2;"></div><div style="left:506px;top:556px;width:839px;height:177px;background:#e3f5f6;"></div><div class="b" style="left:296px;top:264px;font-size:50px;line-height:50px;color:#4a4a4a;font-weight:bold;">1</div><div class="b" style="left:372px;top:442px;font-size:50px;line-height:50px;color:#4a4a4a;font-weight:bold;">2</div><div class="b" style="left:451px;top:620px;font-size:50px;line-height:50px;color:#4a4a4a;font-weight:bold;">3</div><div class="b" style="left:369px;top:226px;font-size:30.5px;line-height:30.5px;color:#111;font-weight:bold;">時間短縮</div><div class="b" style="left:445px;top:404px;font-size:30.5px;line-height:30.5px;color:#111;font-weight:bold;">業務効率向上</div><div class="b" style="left:526px;top:582px;font-size:30.5px;line-height:30.5px;color:#111;font-weight:bold;">費用対効果</div><div style="left:369px;top:275px;font-size:25px;line-height:39px;color:#222;">イルシルによるスライド作成は最大1/3の時間がの削減ができるため、スライド<br>作成にかかる時間の削減が期待できる。</div><div style="left:445px;top:453px;font-size:25px;line-height:39px;color:#222;">イルシルを使えば、スライド作成にかかる時間を削減し、より本質的な業<br>務に集中できます。</div><div style="left:527px;top:631px;font-size:25px;line-height:39px;color:#222;">沿ったものが作れて価格が見合うのであれば費用対効果の観点で<br>検討できる</div></div></div>
<!--/DESIGNS-->

<!-- right panel -->
<div id="rp"></div>
<div class="a" style="left:2113px;top:169px;width:760px;height:163px;background:#f2f2f2;border-radius:23px 23px 0 0;border-bottom:1px solid #c8c8c8"></div>
<svg style="left:2155px;top:205px" width="60" height="60" viewBox="2155 205 60 60"><path d="M2178.8 220.5 C2181 231 2184 234.5 2193 237 C2184 239.5 2181 243 2178.8 253.5 C2176.6 243 2173.6 239.5 2164.6 237 C2173.6 234.5 2176.6 231 2178.8 220.5 Z" fill="none" stroke="#0a9ab0" stroke-width="3.3" stroke-linejoin="round"/><path d="M2199 211.5 C2199.7 218.5 2201 220.8 2208 221.5 C2201 222.2 2199.7 224.5 2199 231.5 C2198.3 224.5 2197 222.2 2190 221.5 C2197 220.8 2198.3 218.5 2199 211.5 Z" fill="#0a9ab0"/></svg>
<div class="lbl" style="left:2185px;top:267px">AI生成</div>
<svg style="left:2300px;top:210px" width="44" height="48" viewBox="0 0 44 48"><path d="M12 40 H6 a4 4 0 0 1 -4 -4 V6 a4 4 0 0 1 4 -4 H27 a4 4 0 0 1 4 4 V9" fill="none" stroke="#808080" stroke-width="3.4"/><rect x="12" y="9.5" width="30" height="36" rx="4" fill="none" stroke="#808080" stroke-width="3.4"/><path d="M18 19 H36 M18 25 H36 M18 31 H36 M18 37 H36" stroke="#808080" stroke-width="2.6"/></svg>
<div class="lbl" style="left:2322px;top:267px">入力モード切替</div>
<svg style="left:2430px;top:205px" width="58" height="58" viewBox="2430 205 58 58"><circle cx="2458.7" cy="233.5" r="20.7" fill="none" stroke="#808080" stroke-width="3.6"/><path d="M2451.8 227 C2451.8 223.2 2454.6 221 2459 221 C2463.4 221 2466.3 223.5 2466.3 227 C2466.3 231.5 2458.6 232.5 2458.6 238" fill="none" stroke="#808080" stroke-width="3.6" stroke-linecap="round"/><circle cx="2458.6" cy="245" r="2.6" fill="#808080"/></svg>
<div class="lbl" style="left:2459px;top:267px">操作方法</div>
<svg style="left:2800px;top:230px" width="40" height="40" viewBox="2800 230 40 40"><path d="M2804.1 234.5 L2834.2 264.9 M2834.2 234.5 L2804.1 264.9" stroke="#808080" stroke-width="4.2" stroke-linecap="round"/></svg>
<div class="tag tt" style="left:2125px;top:338px;width:90px">タイトル</div>
<div class="rt" style="left:2218px;top:345px">導入の検討ポイント</div>
<div class="tag th" style="left:2195px;top:388px;width:89px">ヘッダー</div>
<div class="rt" style="left:2287px;top:396px">時間短縮</div>
<div class="tag tb" style="left:2247px;top:439px;width:72px">ボディ</div>
<div class="rt" style="left:2322px;top:446px;line-height:50.5px;margin-top:-12.75px;letter-spacing:-.5px">イルシルによるスライド作成は最大1/3の時間<br>がの削減ができるため、スライド作成にかかる<br>時間の削減が期待できる。</div>
<div class="tag th" style="left:2195px;top:590px;width:89px">ヘッダー</div>
<div class="rt" style="left:2287px;top:598px">業務効率向上</div>
<div class="tag tb" style="left:2247px;top:640px;width:72px">ボディ</div>
<div class="rt" style="left:2322px;top:648px;line-height:50.5px;margin-top:-12.75px;letter-spacing:-.5px">イルシルを使えば、スライド作成にかかる時間<br>を削減し、より本質的な業務に集中できます。</div>
<div class="tag th" style="left:2195px;top:741px;width:89px">ヘッダー</div>
<div class="rt" style="left:2287px;top:749px">費用対効果</div>
<div class="tag tb" style="left:2247px;top:792px;width:72px">ボディ</div>
<div class="rt" style="left:2322px;top:798px;line-height:50.5px;margin-top:-12.75px;letter-spacing:-.5px">沿ったものが作れて価格が見合うのであれば費<br>用対効果の観点で検討できる</div>
<div class="a" style="left:2136px;top:1537px;width:272px;height:57px;background:#fff;border:1px solid #dedede;border-radius:7px;box-shadow:0 4px 6px rgba(0,0,0,.22)"></div>
<svg style="left:2151px;top:1554px" width="14" height="24" viewBox="0 0 14 24"><path d="M13 1 V23 L1 12 Z" fill="#dcdcdc"/></svg>
<svg style="left:2372px;top:1554px" width="14" height="24" viewBox="0 0 14 24"><path d="M1 1 V23 L13 12 Z" fill="#dcdcdc"/></svg>
<div class="a" style="left:2194px;top:1556px;font-size:21px;line-height:21px;color:#555">ロール切り替え</div>
<div class="a" style="left:2113px;top:1613px;width:760px;height:1px;background:#c8c8c8"></div>
<div class="a" style="left:2128px;top:1636px;font-size:23.4px;line-height:24px;color:#111">- 時間短縮できるのに興味</div>
<div class="a" style="left:2670px;top:1590px;width:175px;height:170px;border-radius:50%;background:radial-gradient(closest-side,rgba(0,0,0,.06),rgba(0,0,0,0))"></div>
<div class="a" style="left:2708px;top:1623px;width:100px;height:100px;border-radius:40px;background:linear-gradient(180deg,#0798ae,#057cae);box-shadow:0 3px 10px rgba(0,0,0,.18),inset 0 0 0 1px rgba(255,255,255,.15)"></div>
<svg style="left:2725px;top:1640px" width="64" height="64" viewBox="2725 1640 64 64"><path d="M2757 1645 C2742.5 1645 2731 1656 2731 1671 C2731 1686 2742.5 1697.5 2757 1697.5 C2763 1697.5 2768 1696 2772 1693.5 C2775 1696.5 2779 1698.5 2783.5 1698.5 C2784.5 1698.5 2784.5 1697.5 2784 1697 C2781.5 1694.5 2780.5 1691 2781 1688 C2782.5 1683 2783.5 1677 2783.5 1671 C2783.5 1656 2771.5 1645 2757 1645 Z" fill="#fff"/><ellipse cx="2748.5" cy="1671.8" rx="3.1" ry="5.6" fill="#0790b0"/><ellipse cx="2767" cy="1671.8" rx="3.1" ry="5.6" fill="#0790b0"/></svg>

</body>
</html>
